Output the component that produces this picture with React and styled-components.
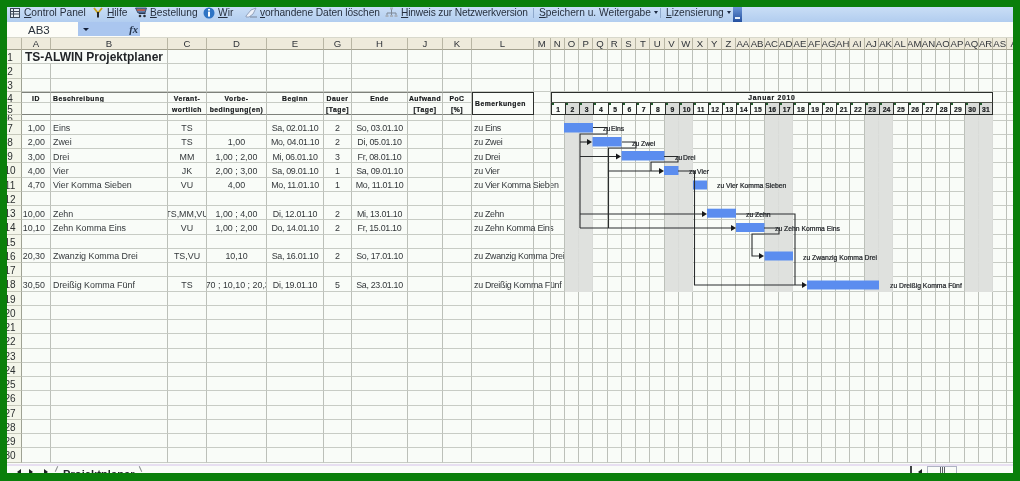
import React from 'react';
import styled, { createGlobalStyle } from 'styled-components';

const Global = createGlobalStyle`
  html, body { margin: 0; padding: 0; background: #0a7f0a; }
  body { width: 1020px; height: 481px; overflow: hidden; font-family: "Liberation Sans", Arial, sans-serif; }
`;

const Frame = styled.div`
  position: relative;
  margin: 7px 0 0 7px;
  width: 1006px;
  height: 466px;
  overflow: hidden;
  background: #f9fcf8;
  display: flex;
  flex-direction: column;
  filter: blur(0.45px);
`;

const Toolbar = styled.div`
  height: 15px;
  flex: none;
  display: flex;
  align-items: flex-start;
  padding: 0 0 0 3px;
  box-sizing: border-box;
  background: linear-gradient(#c9def6, #b2cdef);
  font-size: 10.2px;
  line-height: 11px;
  color: #27303f;
  white-space: nowrap;
`;

const Item = styled.div`
  display: flex;
  align-items: center;
  margin-left: ${p => p.$ml || 0}px;
  gap: ${p => p.$gap || 3}px;
  height: 11px;
`;

const Label = styled.span`
  display: block;
  width: ${p => p.$w}px;
  letter-spacing: ${p => p.$ls || 0}px;
`;

const Sep = styled.div`
  width: 1px;
  height: 10px;
  margin: 1px 5px 0 ${p => p.$ml || 5}px;
  background: #8fa9cc;
`;

const Caret = styled.span`
  display: inline-block;
  margin-left: 3px;
  vertical-align: 2px;
  border: 2.5px solid transparent;
  border-top: 3px solid #1d2a44;
  border-bottom: 0;
`;

const Overflow = styled.div`
  width: 9px;
  height: 15px;
  margin: 0 0 0 6px;
  background: linear-gradient(#6d97d8, #234f9e);
  position: relative;
  &::after {
    content: "";
    position: absolute;
    left: 2px;
    bottom: 3px;
    width: 5px;
    height: 2px;
    background: #e8f0fb;
  }
`;

const FormulaBar = styled.div`
  height: 16px;
  flex: none;
  display: flex;
  background: #fdfdf8;
  border-bottom: 1px solid #d8d8cc;
  box-sizing: border-box;
`;

const NameBox = styled.div`
  width: 71px;
  padding-left: 21px;
  box-sizing: border-box;
  font-size: 11.5px;
  line-height: 16px;
  color: #28303a;
`;

const FxBlock = styled.div`
  width: 62px;
  margin-bottom: 1px;
  background: #aac6ef;
  display: flex;
  align-items: center;
  justify-content: space-between;
  padding: 0 2px 0 5px;
  box-sizing: border-box;
`;

const DropCaret = styled.span`
  border: 3px solid transparent;
  border-top: 3px solid #14213a;
  border-bottom: 0;
`;

const Fx = styled.span`
  font-family: "Liberation Serif", serif;
  font-style: italic;
  font-weight: 700;
  font-size: 10.5px;
  color: #22324a;
`;

const tracks = [15, 29, 117, 39, 60, 57, 28, 56, 35, 29, 62, 16.5, ...Array(31).fill(14.29), 14, 14];
const rowTracks = [12, 14.3, 14.3, 13.4, 11.5, 11.5, 5.6, ...Array(24).fill(14.25)];

const Sheet = styled.div`
  position: relative;
  flex: none;
  display: grid;
  grid-template-columns: ${tracks.map(t => t + 'px').join(' ')};
  grid-template-rows: ${rowTracks.map(t => t + 'px').join(' ')};
  width: 1006px;
  overflow: hidden;
`;

const ColHead = styled.div`
  background: #eeeadb;
  border-right: 1px solid #b9b6a4;
  border-bottom: 1px solid #a3a08e;
  box-sizing: border-box;
  display: flex;
  align-items: center;
  justify-content: center;
  font-size: 9.6px;
  color: #30343a;
  overflow: hidden;
`;

const RowHead = styled.div`
  background: #f4f6ea;
  border-right: 1px solid #9fa294;
  border-bottom: 1px solid #c6c8ba;
  box-sizing: border-box;
  display: flex;
  align-items: center;
  justify-content: center;
  padding: 2px 8px 0 0;
  font-size: 10px;
  line-height: 9px;
  color: #2c3030;
  white-space: nowrap;
  min-width: 0;
  overflow: hidden;
`;

const Cell = styled.div`
  min-width: 0;
  box-sizing: border-box;
  display: flex;
  align-items: center;
  justify-content: ${p => p.$align === 'right' ? 'flex-end' : p.$align === 'center' ? 'center' : 'flex-start'};
  padding: ${p => p.$align === 'right' ? '2px 5px 0 0' : p.$align === 'center' ? '2px 0 0' : '2px 0 0 2px'};
  border-right: 1px solid ${p => p.$weekend ? '#d9dbd8' : '#bcc0b9'};
  border-bottom: 1px solid ${p => p.$weekend ? '#dfe1de' : '#c8ccc5'};
  background: ${p => p.$weekend ? '#dfe1de' : 'transparent'};
  font-size: 8.9px;
  letter-spacing: ${p => p.$tight ? '-0.3px' : '0'};
  color: #33373a;
  white-space: nowrap;
  overflow: ${p => p.$spill ? 'visible' : 'hidden'};
`;

const Title = styled(Cell)`
  font-size: 12px;
  font-weight: 700;
  color: #1f2226;
  padding: 0 0 0 3px;
  grid-column: span 2;
`;

const HeadCell = styled.div`
  min-width: 0;
  box-sizing: border-box;
  display: flex;
  align-items: center;
  justify-content: ${p => p.$left ? 'flex-start' : 'center'};
  padding: ${p => p.$bottom ? '2px' : '1px'} 0 0 ${p => p.$left ? 2 : 0}px;
  border-top: ${p => p.$top ? '1px solid #7e817b' : '0'};
  border-bottom: ${p => p.$bottom ? '1px solid #7e817b' : '1px solid #c8ccc5'};
  border-right: 1px solid #bcc0b9;
  font-size: 6.8px;
  font-weight: 700;
  letter-spacing: 0.5px;
  -webkit-text-stroke: 0.2px #15181a;
  color: #15181a;
  white-space: nowrap;
  overflow: hidden;
`;

const NotesHead = styled(HeadCell)`
  grid-row: span 2;
  border: 1px solid #2c2f2c;
  justify-content: flex-start;
  padding: 0 0 0 2px;
`;

const MonthHead = styled(HeadCell)`
  grid-column: span 31;
  border: 1px solid #2c2f2c;
  border-bottom: 1px solid #55584f;
  letter-spacing: 0.7px;
  padding: 0;
  justify-content: center;
`;

const DayHead = styled(HeadCell)`
  border-top: 0;
  border-left: 1px solid #2c2f2c;
  border-right: ${p => p.$last ? '1px solid #2c2f2c' : '0'};
  border-bottom: 1px solid #2c2f2c;
  background: ${p => p.$weekend ? '#dadcd9' : 'transparent'};
  letter-spacing: 0.2px;
  position: relative;
  &::before {
    content: "";
    position: absolute;
    left: 0;
    top: 0;
    width: 2px;
    height: 2px;
    background: #1d5a2a;
  }
`;

const GanttLayer = styled.svg`
  position: absolute;
  left: 0;
  top: 0;
  pointer-events: none;
  & text {
    font-family: "Liberation Sans", Arial, sans-serif;
    font-size: 6.8px;
    stroke: #23262a;
    stroke-width: 0.22px;
    fill: #23262a;
  }
`;

const TabBar = styled.div`
  flex: none;
  height: 7px;
  margin-top: 1px;
  display: flex;
  align-items: flex-start;
  border-top: 2px solid #e7dff1;
  box-sizing: border-box;
  background: #f9fcf8;
  font-size: 11px;
  color: #23262a;
  position: relative;
  padding-left: 10px;
`;

const NavArrow = styled.span`
  margin-top: 3px;
  margin-right: ${p => p.$mr}px;
  border: 3px solid transparent;
  border-${p => p.$dir}: 4px solid #1c2022;
  border-${p => p.$dir === 'left' ? 'right' : 'left'}: 0;
`;

const TabName = styled.div`
  margin-left: 15px;
  margin-top: 2px;
  font-weight: 700;
  font-size: 11px;
  line-height: 12px;
  letter-spacing: 0.1px;
  position: relative;
  &::before, &::after {
    content: "";
    position: absolute;
    top: -2px;
    width: 1px;
    height: 6px;
    background: #8a8e90;
    transform: rotate(-25deg);
  }
  &::before { left: -7px; transform: rotate(25deg); }
  &::after { right: -6px; }
`;

const ScrollBits = styled.div`
  margin-left: auto;
  margin-right: 56px;
  display: flex;
  align-items: flex-start;
`;

const Grip = styled.div`
  width: 2px;
  height: 7px;
  margin-right: 6px;
  background: #3e4244;
`;

const Thumb = styled.div`
  width: 30px;
  height: 7px;
  margin-left: 5px;
  border: 1px solid #aeb2c2;
  border-bottom: 0;
  box-sizing: border-box;
  display: flex;
  justify-content: center;
  gap: 1px;
  & > i { display: block; width: 1px; height: 6px; background: #5a5e66; }
`;

const days = Array.from({ length: 31 }, (_, i) => i + 1);
const isWeekend = d => [2, 3, 9, 10, 16, 17, 23, 24, 30, 31].includes(d);
const letters = ['A','B','C','D','E','G','H','J','K','L','M','N','O','P','Q','R','S','T','U','V','W','X','Y','Z','AA','AB','AC','AD','AE','AF','AG','AH','AI','AJ','AK','AL','AM','AN','AO','AP','AQ','AR','AS','A'];

const tasks = {
  7: ['1,00', 'Eins', 'TS', '', 'Sa, 02.01.10', '2', 'So, 03.01.10', 'zu Eins'],
  8: ['2,00', 'Zwei', 'TS', '1,00', 'Mo, 04.01.10', '2', 'Di, 05.01.10', 'zu Zwei'],
  9: ['3,00', 'Drei', 'MM', '1,00 ; 2,00', 'Mi, 06.01.10', '3', 'Fr, 08.01.10', 'zu Drei'],
  10: ['4,00', 'Vier', 'JK', '2,00 ; 3,00', 'Sa, 09.01.10', '1', 'Sa, 09.01.10', 'zu Vier'],
  11: ['4,70', 'Vier Komma Sieben', 'VU', '4,00', 'Mo, 11.01.10', '1', 'Mo, 11.01.10', 'zu Vier Komma Sieben'],
  13: ['10,00', 'Zehn', 'TS,MM,VU', '1,00 ; 4,00', 'Di, 12.01.10', '2', 'Mi, 13.01.10', 'zu Zehn'],
  14: ['10,10', 'Zehn Komma Eins', 'VU', '1,00 ; 2,00', 'Do, 14.01.10', '2', 'Fr, 15.01.10', 'zu Zehn Komma Eins'],
  16: ['20,30', 'Zwanzig Komma Drei', 'TS,VU', '10,10', 'Sa, 16.01.10', '2', 'So, 17.01.10', 'zu Zwanzig Komma Drei'],
  18: ['30,50', 'Dreißig Komma Fünf', 'TS', '4,70 ; 10,10 ; 20,30', 'Di, 19.01.10', '5', 'Sa, 23.01.10', 'zu Dreißig Komma Fünf'],
};

const bars = [
  [564, 123, 29, 9.5], [592.5, 137, 29, 9.5], [621.5, 151, 43, 9.5], [664, 166, 14.5, 9],
  [693, 180.5, 14, 9], [707, 208.7, 29, 9], [736, 223, 28.5, 9], [764.5, 251.5, 28.5, 9], [807, 280.5, 72, 9],
];

const links = [
  'M593 127.5H607V134H580V228', 'M580 142H590', 'M580 156.5H618', 'M580 214H704', 'M580 228H733',
  'M622 142H636V148H608.5V228', 'M608.5 171H661',
  'M664 156.5H678V162H651V171',
  'M678 171H694.5V285H804',
  'M736 214H795V285',
  'M764 228H779V234H752V256H761',
];

const arrows = [[592, 142], [621, 156.5], [664, 171], [707, 214], [736, 228], [764, 256], [807, 285]];

const ganttLabels = [
  ['zu', 603, 131], ['Eins', 611, 131], ['zu', 632, 145.5], ['Zwei', 641, 145.5], ['zu', 675, 159.5], ['Drei', 683, 159.5],
  ['zu', 689, 174], ['Vier', 697, 174], ['zu Vier Komma Sieben', 717, 188], ['zu Zehn', 746, 217],
  ['zu Zehn Komma Eins', 775, 231], ['zu Zwanzig Komma Drei', 803, 259.5], ['zu Dreißig Komma Fünf', 890, 288],
];

const Row = ({ n }) => {
  const t = tasks[n] || [];
  const gridWeekend = d => isWeekend(d) && n >= 6 && n <= 18;
  return (
    <>
      <RowHead>{n}</RowHead>
      <Cell $align="right">{t[0]}</Cell>
      <Cell>{t[1]}</Cell>
      <Cell $align="center">{t[2]}</Cell>
      <Cell $align="center">{t[3]}</Cell>
      <Cell $align="center" $tight>{t[4]}</Cell>
      <Cell $align="center">{t[5]}</Cell>
      <Cell $align="center" $tight>{t[6]}</Cell>
      <Cell />
      <Cell />
      <Cell $spill $tight>{t[7]}</Cell>
      <Cell />
      {days.map(d => <Cell key={d} $weekend={gridWeekend(d)} />)}
      <Cell />
      <Cell />
    </>
  );
};

const PlainRow = ({ n }) => (
  <>
    <RowHead>{n}</RowHead>
    {Array.from({ length: 11 }, (_, i) => <Cell key={'a' + i} />)}
    {days.map(d => <Cell key={d} />)}
    <Cell />
    <Cell />
  </>
);

const heads4 = [['ID'], ['Beschreibung', 1], ['Verant-'], ['Vorbe-'], ['Beginn'], ['Dauer'], ['Ende'], ['Aufwand'], ['PoC']];
const heads5 = [[''], ['', 1], ['wortlich'], ['bedingung(en)'], [''], ['[Tage]'], [''], ['[Tage]'], ['[%]']];

const GridIcon = () => (
  <svg width="10" height="10" viewBox="0 0 10 10">
    <rect x="0.5" y="0.5" width="9" height="9" fill="#e8eef6" stroke="#3c4656" />
    <path d="M0 3.5H10M0 6H10M3.5 0V10" stroke="#3c4656" strokeWidth="1" />
  </svg>
);
const ToolIcon = () => (
  <svg width="10" height="11" viewBox="0 0 10 11">
    <path d="M1 1L5 6L9 1" fill="none" stroke="#c9a21a" strokeWidth="1.8" />
    <path d="M5 5V10.5" stroke="#20242a" strokeWidth="2" />
  </svg>
);
const CartIcon = () => (
  <svg width="12" height="11" viewBox="0 0 12 11">
    <path d="M0.5 1H11.5L10 6H3Z" fill="#5c7fae" stroke="#2c3a52" strokeWidth="0.8" />
    <path d="M2 3H10" stroke="#d7532e" strokeWidth="1.4" />
    <path d="M4 6.5H10.5" stroke="#2c3a52" />
    <circle cx="5" cy="9" r="1.3" fill="#2a2f36" />
    <circle cx="9.5" cy="9" r="1.3" fill="#2a2f36" />
  </svg>
);
const InfoIcon = () => (
  <svg width="12" height="12" viewBox="0 0 12 12">
    <circle cx="6" cy="6" r="5.5" fill="#2f74c4" />
    <rect x="5" y="2" width="2" height="1.6" fill="#fff" />
    <rect x="5" y="4.6" width="2" height="5" fill="#fff" />
  </svg>
);
const EraserIcon = () => (
  <svg width="13" height="11" viewBox="0 0 13 11">
    <path d="M1 9L6 3L11 1L8 7L4 10H1Z" fill="#eef2fa" stroke="#8493ad" strokeWidth="0.8" />
    <path d="M5 10H12" stroke="#6a7486" strokeWidth="0.8" />
  </svg>
);
const NetIcon = () => (
  <svg width="13" height="11" viewBox="0 0 13 11">
    <path d="M6.5 2V6M2 9V6H11V9M6.5 6V9" fill="none" stroke="#7d8795" />
    <rect x="5" y="0.5" width="3" height="2" fill="#a8b2bf" />
    <rect x="0.5" y="8" width="3" height="2" fill="#a8b2bf" />
    <rect x="5" y="8" width="3" height="2" fill="#a8b2bf" />
    <rect x="9.5" y="8" width="3" height="2" fill="#a8b2bf" />
  </svg>
);

export default function App() {
  return (
    <>
      <Global />
      <Frame>
        <Toolbar>
          <Item $gap={4}><GridIcon /><Label $w={61}><u>C</u>ontrol Panel</Label></Item>
          <Item $ml={8} $gap={4}><ToolIcon /><Label $w={21}><u>H</u>ilfe</Label></Item>
          <Item $ml={7}><CartIcon /><Label $w={46}><u>B</u>estellung</Label></Item>
          <Item $ml={7}><InfoIcon /><Label $w={15}><u>W</u>ir</Label></Item>
          <Item $ml={12} $gap={2}><EraserIcon /><Label $w={119} $ls={-0.08}><u>v</u>orhandene Daten löschen</Label></Item>
          <Item $ml={6}><NetIcon /><Label $w={127} $ls={-0.15}><u>H</u>inweis zur Netzwerkversion</Label></Item>
          <Sep />
          <Item><Label $w={116}><u>S</u>peichern u. Weitergabe<Caret /></Label></Item>
          <Sep />
          <Item><Label $w={61}><u>L</u>izensierung<Caret /></Label></Item>
          <Overflow />
        </Toolbar>
        <FormulaBar>
          <NameBox>AB3</NameBox>
          <FxBlock><DropCaret /><Fx>fx</Fx></FxBlock>
        </FormulaBar>
        <Sheet>
          <ColHead />
          {letters.map((l, i) => <ColHead key={i}>{l}</ColHead>)}

          <RowHead>1</RowHead>
          <Title $spill>TS-ALWIN Projektplaner</Title>
          {Array.from({ length: 9 }, (_, i) => <Cell key={i} />)}
          {days.map(d => <Cell key={d} />)}
          <Cell /><Cell />

          <PlainRow n={2} />
          <PlainRow n={3} />

          <RowHead>4</RowHead>
          {heads4.map(([h, left], i) => <HeadCell key={i} $top $left={left}>{h}</HeadCell>)}
          <NotesHead>Bemerkungen</NotesHead>
          <Cell />
          <MonthHead>Januar 2010</MonthHead>
          <Cell /><Cell />

          <RowHead>5</RowHead>
          {heads5.map(([h, left], i) => <HeadCell key={i} $bottom $left={left}>{h}</HeadCell>)}
          <Cell />
          {days.map(d => <DayHead key={d} $bottom $weekend={isWeekend(d)} $last={d === 31}>{d}</DayHead>)}
          <Cell /><Cell />

          {Array.from({ length: 25 }, (_, i) => <Row key={i} n={i + 6} />)}

          <GanttLayer width="1006" height="427" viewBox="7 38 1006 427">
            {bars.map(([x, y, w, h], i) => <rect key={i} x={x} y={y} width={w} height={h} fill="#5b8def" />)}
            {links.map((d, i) => <path key={i} d={d} fill="none" stroke="#2a2d2e" strokeWidth="1.1" />)}
            {arrows.map(([x, y], i) => <path key={i} d={`M${x} ${y}L${x - 5} ${y - 3}V${y + 3}Z`} fill="#16181a" />)}
            {ganttLabels.map(([t, x, y], i) => <text key={i} x={x} y={y}>{t}</text>)}
          </GanttLayer>
        </Sheet>
        <TabBar>
          <NavArrow $dir="right" $mr={8} />
          <NavArrow $dir="left" $mr={11} />
          <NavArrow $dir="left" $mr={0} />
          <TabName>Projektplaner</TabName>
          <ScrollBits>
            <Grip />
            <NavArrow $dir="right" $mr={0} />
            <Thumb><i /><i /><i /></Thumb>
          </ScrollBits>
        </TabBar>
      </Frame>
    </>
  );
}
